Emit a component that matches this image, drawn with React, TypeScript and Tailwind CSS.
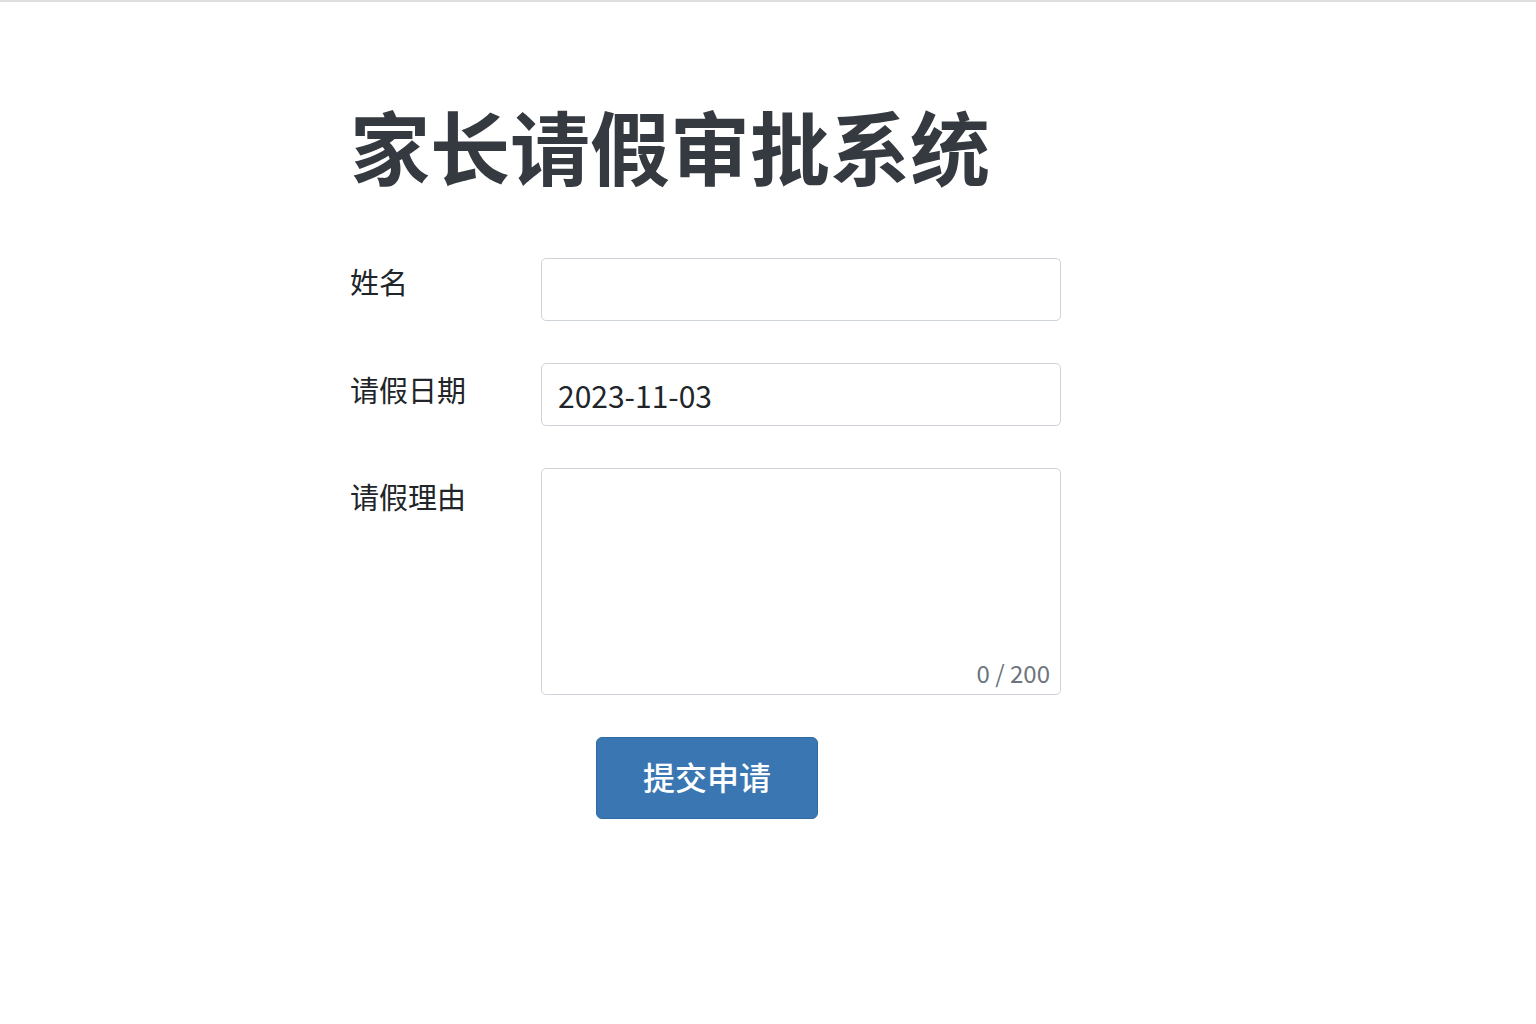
import { useState } from 'react';

const font = { fontFamily: '"Noto Sans CJK SC", "Noto Sans", sans-serif' };

export default function App() {
  const [name, setName] = useState('');
  const [date, setDate] = useState('2023-11-03');
  const [reason, setReason] = useState('');

  return (
    <div className="min-h-screen bg-white border-t-2 border-[#dedede]" style={font}>
      <div className="w-[720px] ml-[350px] pt-[86px]">
        <h1 className="text-[80px] leading-[112px] font-semibold text-[#343a40]">家长请假审批系统</h1>

        <form className="mt-[58px] flex flex-col gap-[42px]" onSubmit={(e) => e.preventDefault()}>
          <div className="flex items-start">
            <label className="w-[191px] text-[29px] leading-[40px] pt-[3px] text-[#212529]">姓名</label>
            <input
              value={name}
              onChange={(e) => setName(e.target.value)}
              className="w-[520px] h-[63px] border border-[#ced4da] rounded-[5px] px-4 text-[28px] text-[#212529] outline-none"
            />
          </div>

          <div className="flex items-start">
            <label className="w-[191px] text-[29px] leading-[40px] pt-[6px] text-[#212529]">请假日期</label>
            <input
              value={date}
              onChange={(e) => setDate(e.target.value)}
              className="w-[520px] h-[63px] border border-[#ced4da] rounded-[5px] px-4 text-[30px] text-[#212529] outline-none"
            />
          </div>

          <div className="flex items-start">
            <label className="w-[191px] text-[29px] leading-[40px] pt-[8px] text-[#212529]">请假理由</label>
            <div className="relative w-[520px] h-[227px]">
              <textarea
                value={reason}
                maxLength={200}
                onChange={(e) => setReason(e.target.value)}
                className="w-full h-full border border-[#ced4da] rounded-[5px] px-4 py-3 text-[24px] text-[#212529] outline-none resize-none"
              />
              <span className="absolute right-[11px] bottom-[6px] text-[24px] leading-[32px] text-[#6c757d]">
                {reason.length} / 200
              </span>
            </div>
          </div>

          <div className="pl-[246px]">
            <button
              type="submit"
              className="w-[222px] h-[82px] rounded-[6px] bg-[#3a77b2] border border-[#2f6aa3] text-white text-[32px] font-medium pb-[4px]"
            >
              提交申请
            </button>
          </div>
        </form>
      </div>
    </div>
  );
}
